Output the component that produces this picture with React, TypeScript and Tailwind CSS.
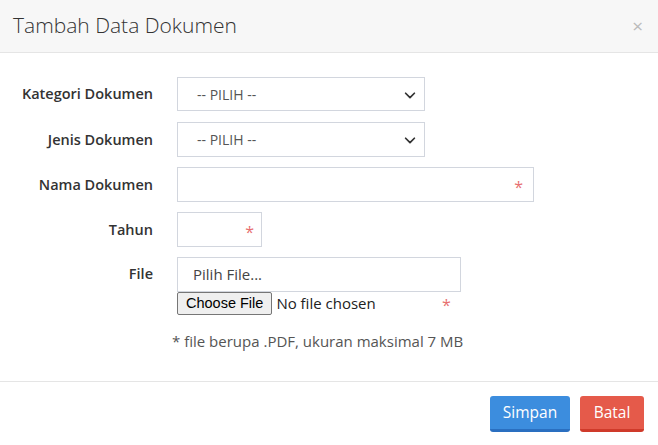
import React from "react";

const Chevron = () => (
  <svg width="14" height="14" viewBox="0 0 16 16" className="absolute right-[7px] top-[10px]">
    <path d="M3 6l5 5 5-5" fill="none" stroke="#333" strokeWidth="2" strokeLinecap="round" strokeLinejoin="round" />
  </svg>
);
const Star = ({ cls }: { cls: string }) => (
  <span className={`absolute text-[#e76f6f] text-[16px] leading-none ${cls}`}>*</span>
);

export default function App() {
  const label = "w-[153px] text-right text-[14.5px] font-semibold text-[#333] pr-0";
  return (
    <div className="w-[658px] h-[445px] bg-white flex flex-col" style={{ fontFamily: '"Open Sans", sans-serif' }}>
      <div className="h-[53px] bg-[#f7f7f7] border-b border-[#e5e5e5] flex items-center justify-between pl-[13px] pr-[15px]">
        <span className="text-[21px] font-light text-[#333]">Tambah Data Dokumen</span>
        <span className="text-[19px] text-[#bbb]">×</span>
      </div>
      <div className="flex flex-col pt-[24px] h-[329px] border-b border-[#e5e5e5]">
        <div className="flex items-center h-[34px]">
          <div className={label}>Kategori Dokumen</div>
          <div className="relative ml-[24px] w-[248px] h-[34px] border border-[#d2d6de] text-[14px] text-[#555] pl-[19px] flex items-center">-- PILIH --<Chevron /></div>
        </div>
        <div className="flex items-center h-[35px] mt-[11px]">
          <div className={label}>Jenis Dokumen</div>
          <div className="relative ml-[24px] w-[248px] h-[35px] border border-[#d2d6de] text-[14px] text-[#555] pl-[19px] flex items-center">-- PILIH --<Chevron /></div>
        </div>
        <div className="flex items-center h-[35px] mt-[10px]">
          <div className={label}>Nama Dokumen</div>
          <div className="relative ml-[24px] w-[357px] h-[35px] border border-[#d2d6de]"><Star cls="right-[10px] top-[11px]" /></div>
        </div>
        <div className="flex items-center h-[35px] mt-[10px]">
          <div className={label}>Tahun</div>
          <div className="relative ml-[24px] w-[85px] h-[35px] border border-[#d2d6de]"><Star cls="right-[7px] top-[11px]" /></div>
        </div>
        <div className="flex items-start mt-[10px]">
          <div className={`${label} pt-[6px]`}>File</div>
          <div className="relative ml-[24px] flex flex-col">
            <div className="w-[284px] h-[35px] border border-[#d2d6de] text-[15px] text-[#444] pl-[15px] flex items-center">Pilih File...</div>
            <div className="flex items-center h-[23px]">
              <span className="h-[23px] px-[8px] border border-[#767676] rounded-[2px] bg-[#efefef] text-[14.5px] text-black flex items-center" style={{ fontFamily: '"Liberation Sans", Arial, sans-serif' }}>Choose File</span>
              <span className="ml-[4px] text-[15px] text-[#222]">No file chosen</span>
            </div>
            <Star cls="left-[265px] top-[40px]" />
          </div>
        </div>
        <div className="ml-[172px] mt-[15px] text-[15px] text-[#555]">* file berupa .PDF, ukuran maksimal 7 MB</div>
      </div>
      <div className="flex justify-end gap-[10px] pt-[14px] pr-[14px]">
        <button className="w-[80px] h-[36px] bg-[#3c8dde] border-b-[3px] border-[#2a6fc0] rounded-[3px] text-white text-[15.5px]">Simpan</button>
        <button className="w-[64px] h-[36px] bg-[#e55a4a] border-b-[3px] border-[#cf3a2a] rounded-[3px] text-white text-[15.5px]">Batal</button>
      </div>
    </div>
  );
}
